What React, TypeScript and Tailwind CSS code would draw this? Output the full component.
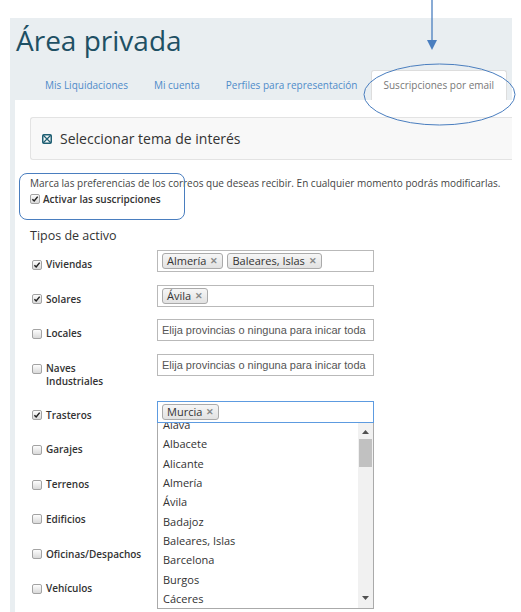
import React from "react";

const Check = ({ checked }: { checked: boolean }) => (
  <span className="relative inline-block w-[10px] h-[10px] rounded-[2px] border border-[#a3a3a3] bg-linear-to-b from-[#fdfdfd] to-[#d9d9d9] shrink-0">
    {checked && (
      <svg viewBox="0 0 8 8" className="absolute inset-0 w-full h-full">
        <path d="M1.4 4.2 L3.2 6 L6.7 1.6" stroke="#222" strokeWidth="1.5" fill="none" />
      </svg>
    )}
  </span>
);

const Tag = ({ text }: { text: string }) => (
  <span className="h-[16px] px-[4px] border border-[#aaaaaa] rounded-[3px] bg-linear-to-b from-[#f6f6f6] to-[#e2e2e2] text-[11px] leading-[14px] text-[#333] flex items-center gap-[4px] whitespace-nowrap">
    {text}
    <span className="text-[9px] text-[#888] font-bold">✕</span>
  </span>
);

type Row = {
  label: string[];
  checked: boolean;
  tags?: string[];
  focus?: boolean;
  hidden?: boolean;
};

const rows: Row[] = [
  { label: ["Viviendas"], checked: true, tags: ["Almería", "Baleares, Islas"] },
  { label: ["Solares"], checked: true, tags: ["Ávila"] },
  { label: ["Locales"], checked: false },
  { label: ["Naves", "Industriales"], checked: false },
  { label: ["Trasteros"], checked: true, tags: ["Murcia"], focus: true },
  { label: ["Garajes"], checked: false, hidden: true },
  { label: ["Terrenos"], checked: false, hidden: true },
  { label: ["Edificios"], checked: false, hidden: true },
  { label: ["Oficinas/Despachos"], checked: false, hidden: true },
  { label: ["Vehículos"], checked: false, hidden: true },
];

const provinces = [
  "Alava",
  "Albacete",
  "Alicante",
  "Almería",
  "Ávila",
  "Badajoz",
  "Baleares, Islas",
  "Barcelona",
  "Burgos",
  "Cáceres",
];

const Dropdown = () => (
  <div className="absolute left-0 top-[22px] w-[217px] h-[186px] bg-white border border-t-0 border-[#aaaaaa] z-10 overflow-hidden">
    <div className="-mt-[8px] pr-[16px]">
      {provinces.map((p) => (
        <div key={p} className="h-[19.4px] leading-[19.4px] pl-[5px] text-[11px] text-[#333]">
          {p}
        </div>
      ))}
    </div>
    <div className="absolute right-0 top-0 bottom-0 w-[15px] bg-[#f1f1f1] flex flex-col items-center">
      <svg width="7" height="4" viewBox="0 0 7 4" className="mt-[7px]">
        <path d="M0 4 L3.5 0 L7 4 Z" fill="#505050" />
      </svg>
      <div className="mt-[5px] w-[13px] h-[28px] bg-[#c1c1c1]" />
      <div className="flex-1" />
      <svg width="7" height="4" viewBox="0 0 7 4" className="mb-[8px]">
        <path d="M0 0 L3.5 4 L7 0 Z" fill="#505050" />
      </svg>
    </div>
  </div>
);

export default function App() {
  return (
    <div className="w-[521px] h-[612px] bg-white relative overflow-hidden font-['Open_Sans',sans-serif]">
      <div className="ml-[10px] mt-[18px] w-[502px] h-[594px] bg-[#e9eef1] flex flex-col">
        <h1 className="pl-[6px] pt-[3px] text-[28px] leading-[38px] text-[#1e5064] font-normal">Área privada</h1>
        <div className="mt-[11px] flex pl-[22px] h-[30px] text-[10px]">
          <div className="px-[13px] flex items-center text-[#4f8bc9]">Mis Liquidaciones</div>
          <div className="px-[13px] flex items-center text-[#4f8bc9]">Mi cuenta</div>
          <div className="px-[13px] flex items-center text-[#4f8bc9]">Perfiles para representación</div>
          <div className="px-[12px] flex items-center text-[#777] bg-white border border-b-0 border-[#dddddd] rounded-t-[3px]">
            Suscripciones por email
          </div>
        </div>
        <div className="ml-[5px] flex-1 bg-white pl-[15px] pt-[17px] flex flex-col">
          <div className="h-[43px] border border-r-0 border-[#e3e3e3] rounded-l-[3px] bg-[#f8f8f8] flex items-center pl-[11px] gap-[8px]">
            <svg width="10" height="10" viewBox="0 0 10 10">
              <rect x="0.75" y="0.75" width="8.5" height="8.5" rx="1.2" stroke="#1f5f73" strokeWidth="1.5" fill="none" />
              <path d="M1 1 L9 9 M9 1 L1 9" stroke="#1f5f73" strokeWidth="1.2" />
            </svg>
            <span className="text-[14px] text-[#333]">Seleccionar tema de interés</span>
          </div>
          <p className="mt-[16px] text-[10px] leading-[14px] text-[#444]">
            Marca las preferencias de los correos que deseas recibir. En cualquier momento podrás modificarlas.
          </p>
          <div className="mt-[2px] flex items-center gap-[3px] h-[14px]">
            <Check checked />
            <span className="text-[10px] font-semibold text-[#333]">Activar las suscripciones</span>
          </div>
          <div className="mt-[21px] text-[12.5px] leading-[18px] text-[#333]">Tipos de activo</div>
          <div className="mt-[5px] flex flex-col">
            {rows.map((r, i) => (
              <div key={i} className="flex mb-[12.7px]">
                <div className="w-[127px] pl-[2px] pt-[8px] flex items-start gap-[4px]">
                  <span className="mt-[1.5px] flex">
                    <Check checked={r.checked} />
                  </span>
                  <span className="text-[10px] leading-[13px] font-semibold text-[#333]">
                    {r.label.map((l) => (
                      <div key={l}>{l}</div>
                    ))}
                  </span>
                </div>
                <div className="relative">
                  <div
                    className={`w-[217px] h-[22px] border ${r.focus ? "border-[#5d9be0]" : "border-[#b9b9b9]"} flex items-center px-[4px] gap-[4px] bg-white`}
                  >
                    {r.tags
                      ? r.tags.map((t) => <Tag key={t} text={t} />)
                      : !r.hidden && (
                          <span className="font-['Liberation_Sans',Arial,sans-serif] text-[11px] text-[#555] whitespace-nowrap">
                            Elija provincias o ninguna para inicar toda
                          </span>
                        )}
                  </div>
                  {r.focus && <Dropdown />}
                </div>
              </div>
            ))}
          </div>
        </div>
      </div>

      {/* annotations */}
      <div className="absolute left-[19px] top-[173px] w-[166px] h-[47px] border border-[#4a7ebf] rounded-[8px]" />
      <svg className="absolute left-0 top-0" width="521" height="612" viewBox="0 0 521 612" fill="none">
        <ellipse cx="439.5" cy="94.5" rx="75.5" ry="30.5" stroke="#4a7ebf" strokeWidth="1" />
        <line x1="432" y1="0" x2="432" y2="42" stroke="#4a7ebf" strokeWidth="1.3" />
        <path d="M427 40 L437 40 L432 50 Z" fill="#4a7ebf" />
      </svg>
    </div>
  );
}
